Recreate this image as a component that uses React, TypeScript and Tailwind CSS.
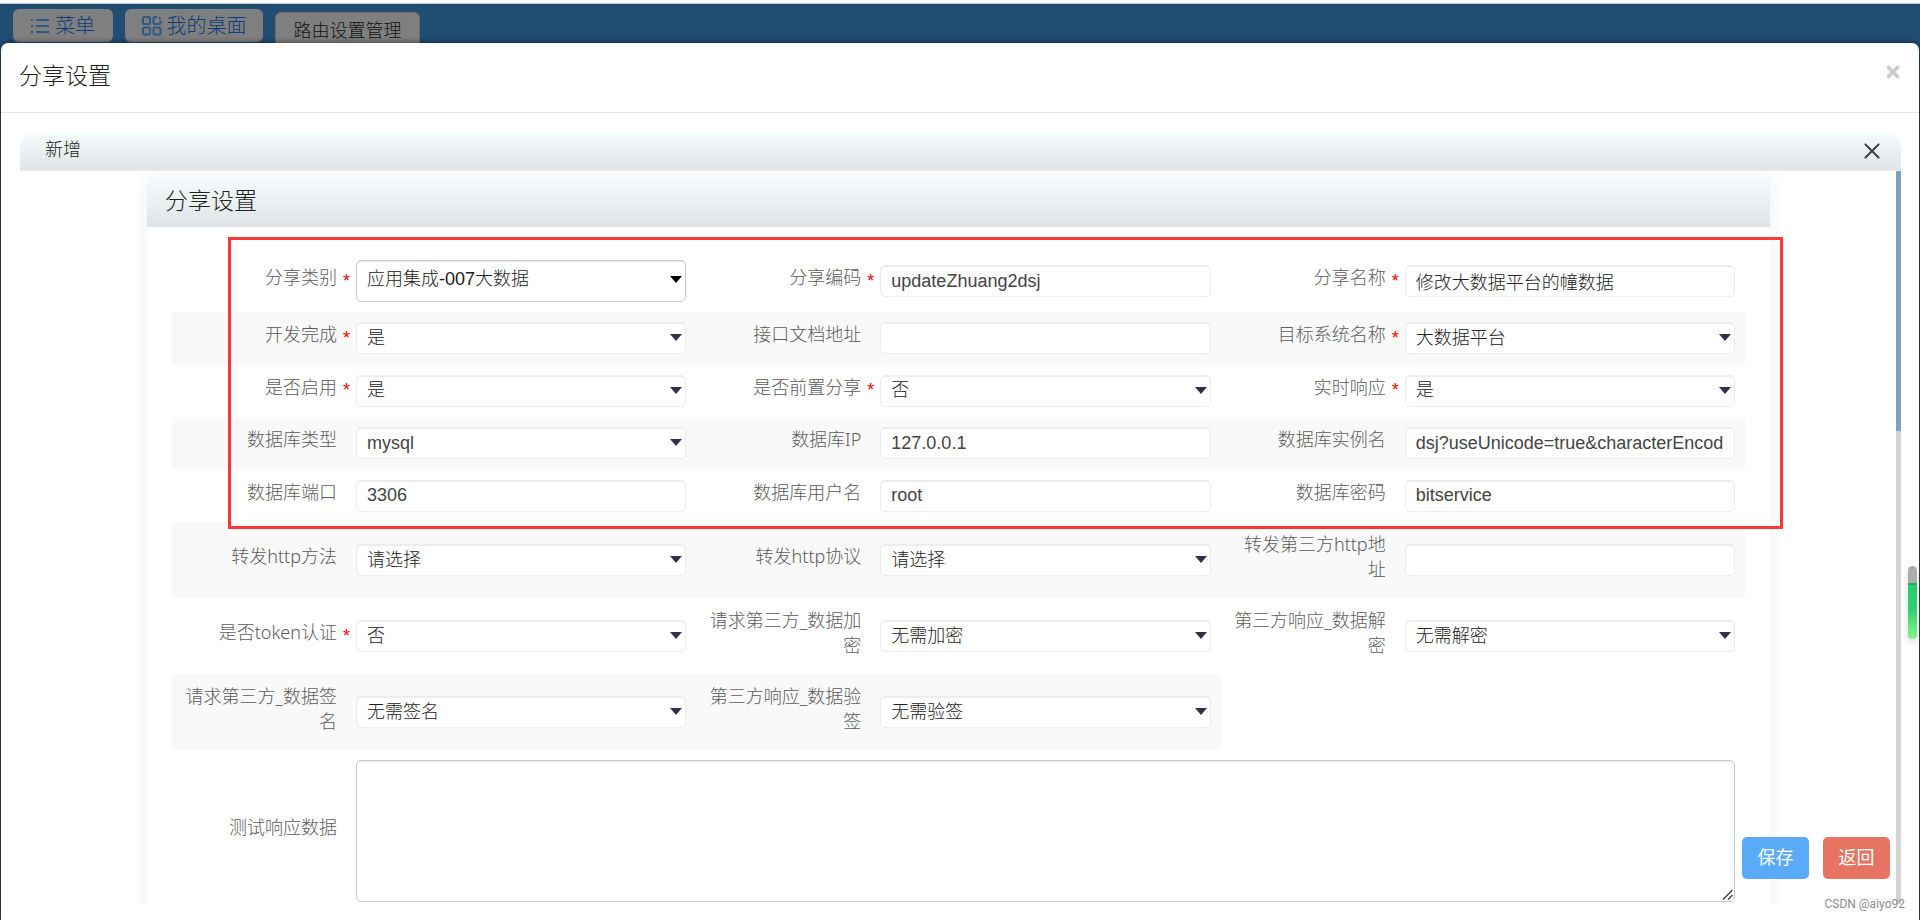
import type { ReactNode } from "react";
import { X } from "lucide-react";

type Field = {
  id: string;
  label: string;
  value?: string;
  select?: boolean;
  required?: boolean;
  prominent?: boolean;
};

const rows: Field[][] = [
  [
    { id: "category", label: "分享类别", value: "应用集成-007大数据", select: true, required: true, prominent: true },
    { id: "code", label: "分享编码", value: "updateZhuang2dsj", required: true },
    { id: "name", label: "分享名称", value: "修改大数据平台的幢数据", required: true },
  ],
  [
    { id: "done", label: "开发完成", value: "是", select: true, required: true },
    { id: "docUrl", label: "接口文档地址" },
    { id: "target", label: "目标系统名称", value: "大数据平台", select: true, required: true },
  ],
  [
    { id: "enabled", label: "是否启用", value: "是", select: true, required: true },
    { id: "preShare", label: "是否前置分享", value: "否", select: true, required: true },
    { id: "realtime", label: "实时响应", value: "是", select: true, required: true },
  ],
  [
    { id: "dbType", label: "数据库类型", value: "mysql", select: true },
    { id: "dbIp", label: "数据库IP", value: "127.0.0.1" },
    { id: "dbInstance", label: "数据库实例名", value: "dsj?useUnicode=true&characterEncoding=utf8" },
  ],
  [
    { id: "dbPort", label: "数据库端口", value: "3306" },
    { id: "dbUser", label: "数据库用户名", value: "root" },
    { id: "dbPassword", label: "数据库密码", value: "bitservice" },
  ],
];

const tallRows: Field[][] = [
  [
    { id: "httpMethod", label: "转发http方法", value: "请选择", select: true },
    { id: "httpProtocol", label: "转发http协议", value: "请选择", select: true },
    { id: "httpUrl", label: "转发第三方http地址" },
  ],
  [
    { id: "token", label: "是否token认证", value: "否", select: true, required: true },
    { id: "encrypt", label: "请求第三方_数据加密", value: "无需加密", select: true },
    { id: "decrypt", label: "第三方响应_数据解密", value: "无需解密", select: true },
  ],
  [
    { id: "sign", label: "请求第三方_数据签名", value: "无需签名", select: true },
    { id: "verify", label: "第三方响应_数据验签", value: "无需验签", select: true },
  ],
];

const controlBase =
  "block w-full min-w-0 appearance-none rounded-[5px] border bg-white px-[10px] font-['Liberation_Sans','Noto_Sans_CJK_SC',sans-serif] text-[18px] font-light outline-none";
const controlPlain = "h-8 border-[#ececec] shadow-[inset_0_1px_1px_#ececec]";
const controlProminent = "h-[42px] border-[#c8c8c8] pb-1 shadow-[inset_0_1px_1px_#ececec]";

function ListIcon() {
  return (
    <svg viewBox="0 0 18 16" className="h-4 w-[18px] text-[#2c5a88]" stroke="currentColor" strokeWidth="2" fill="none">
      <path d="M0 2h2M0 8h2M0 14h2M5 2h13M5 8h13M5 14h13" />
    </svg>
  );
}

function GridIcon() {
  return (
    <svg viewBox="0 0 20 20" className="size-5 text-[#2c5a88]" stroke="currentColor" strokeWidth="2" fill="none">
      <rect x="1" y="1" width="7" height="7" rx="1.5" />
      <rect x="1" y="11.5" width="7" height="7" rx="1.5" />
      <rect x="11.5" y="11.5" width="7" height="7" rx="1.5" />
      <path d="M15 1h-2a1.5 1.5 0 0 0-1.5 1.5v4A1.5 1.5 0 0 0 13 8h4a1.5 1.5 0 0 0 1.5-1.5V4.5M17 1.2l1.5 1.5" />
    </svg>
  );
}

function FieldLabel({ id, required, children }: { id: string; required?: boolean; children: ReactNode }) {
  return (
    <div className="flex w-full items-center pb-[7px] pl-[10px]">
      <label htmlFor={id} className="flex-1 text-right text-[18px] leading-[25px] break-all text-[#5c5c5c]">
        {children}
      </label>
      <span className="w-[19px] shrink-0 pt-[6px] text-center font-['Liberation_Sans',sans-serif] text-[18px] leading-[18px] text-[#f00]">
        {required ? "*" : ""}
      </span>
    </div>
  );
}

function FieldCell({ field, striped }: { field: Field; striped: boolean }) {
  const look = field.prominent ? controlProminent : controlPlain;
  const isLatin = /^[\x20-\x7e]*$/.test(field.value ?? "");
  const tone = isLatin ? "text-[#444]" : "text-[#222]";
  return (
    <div className={`flex w-1/3 items-center pr-[10px] ${striped ? "bg-[#f9f9f9]" : ""}`}>
      <div className="w-[184px] shrink-0">
        <FieldLabel id={field.id} required={field.required}>
          {field.label}
        </FieldLabel>
      </div>
      <div className="relative min-w-0 flex-1">
        {field.select ? (
          <>
            <select id={field.id} defaultValue={field.value} className={`${controlBase} ${look} ${tone}`}>
              <option>{field.value}</option>
            </select>
            <svg
              viewBox="0 0 12 7"
              className={`pointer-events-none absolute right-1 h-[7px] w-3 ${
                field.prominent ? "top-4 text-black" : "top-3 text-[#30304a]"
              }`}
            >
              <path d="M0 0h12L6 7z" fill="currentColor" />
            </svg>
          </>
        ) : (
          <input id={field.id} type="text" defaultValue={field.value} className={`${controlBase} ${look} ${tone}`} />
        )}
      </div>
    </div>
  );
}

export default function App() {
  return (
    <div className="flex h-screen flex-col overflow-hidden bg-[#444] font-['Noto_Sans','Noto_Sans_CJK_SC',sans-serif] font-light">
      <div className="h-1 shrink-0 border-b border-[#c9ccd0] bg-white" />
      <nav className="flex h-[39px] shrink-0 items-end bg-[#224d73] pl-[13px]">
        <button className="mb-px flex h-[33px] w-[100px] items-center justify-center gap-[6px] rounded-md bg-[#7f7f7f] text-[20px] text-[#0a3d7a]">
          <ListIcon />
          菜单
        </button>
        <button className="mb-px ml-3 flex h-[33px] w-[138px] items-center justify-center gap-[5px] rounded-md bg-[#7f7f7f] text-[20px] text-[#0a3d7a]">
          <GridIcon />
          我的桌面
        </button>
        <button className="ml-3 h-[31px] w-[145px] rounded-t-md border border-b-0 border-[#6d6d6d] bg-[#7f7f7f] pt-1 text-[18px] leading-6 text-[#111]">
          路由设置管理
        </button>
      </nav>

      <div className="flex min-h-0 flex-1 bg-linear-to-b from-[#224d73] from-[44px] to-[#444] to-[44px]">
        <section className="relative mx-px flex min-h-0 flex-1 flex-col rounded-t-[7px] bg-white shadow-[0_0_6px_rgba(0,0,0,0.6)]">
          <header className="flex h-[70px] shrink-0 items-start justify-between border-b border-[#e5e5e5] pt-4 pr-[17px] pl-[18px]">
            <h1 className="text-[23px] leading-8 text-[#222]">分享设置</h1>
            <button aria-label="关闭窗口" className="mt-1 text-[#ccc]">
              <X className="size-[18px]" strokeWidth={5} />
            </button>
          </header>

          <div className="mt-[19px] mr-[18px] mb-4 ml-[19px] flex min-h-0 flex-1 flex-col">
            <div className="flex h-[39px] shrink-0 items-center justify-between rounded-t-[15px] border-b border-[#eceeef] bg-linear-to-b from-[#f7fdff] to-[#dfe4e6] pr-4 pl-[25px]">
              <h2 className="pb-1 text-[18px] leading-6 text-[#222]">新增</h2>
              <button aria-label="关闭" className="text-[#44444f]">
                <X className="size-[26px]" strokeWidth={2} />
              </button>
            </div>

            <div className="flex min-h-0 flex-1">
              <div className="min-h-0 flex-1 overflow-hidden pt-1 pr-[126px] pl-[127px]">
                <div className="relative bg-white shadow-[0_0_18px_rgba(0,0,0,0.06)]">
                  <h3 className="h-[52px] bg-linear-to-b from-[#f7fdff] to-[#dfe4e6] pl-[18px] text-[23px] leading-[50px] text-[#222]">
                    分享设置
                  </h3>
                  <form className="px-[25px] pt-[23px] pb-10">
                    {rows.map((fields, i) => (
                      <div key={i} className={`flex ${i === 0 ? "h-[62px]" : i % 2 ? "h-[52px]" : "h-[53px]"}`}>
                        {fields.map((f) => (
                          <FieldCell key={f.id} field={f} striped={i % 2 === 1} />
                        ))}
                      </div>
                    ))}
                    {tallRows.map((fields, i) => (
                      <div key={i} className="flex h-[76px]">
                        {fields.map((f) => (
                          <FieldCell key={f.id} field={f} striped={i % 2 === 0} />
                        ))}
                      </div>
                    ))}
                    <div className="flex items-center pt-[10px] pr-[10px]">
                      <div className="w-[184px] shrink-0">
                        <FieldLabel id="testResponse">测试响应数据</FieldLabel>
                      </div>
                      <div className="relative min-w-0 flex-1">
                        <textarea
                          id="testResponse"
                          className="block h-[142px] w-full resize-none rounded-[5px] border border-[#c8c8c8] bg-white px-[10px] text-[18px] shadow-[inset_0_1px_1px_#ececec] outline-none"
                        />
                        <svg
                          viewBox="0 0 11 11"
                          className="pointer-events-none absolute right-[2px] bottom-[2px] size-[11px] text-[#444]"
                          stroke="currentColor"
                          strokeWidth="1.5"
                        >
                          <path d="M1 10.5 10.5 1M6 10.5 10.5 6" />
                        </svg>
                      </div>
                    </div>
                  </form>
                  <div className="pointer-events-none absolute top-[62px] -right-[13px] left-[81px] h-[292px] border-[3px] border-[#fb3838]" />
                </div>
              </div>
              <div className="w-[5px] shrink-0 bg-[#d3d3d3]">
                <div className="h-[260px] bg-[#82a1bb]" />
              </div>
            </div>
          </div>

          <div className="absolute right-[29px] bottom-[41px] flex gap-[14px] text-[18px] font-normal text-white">
            <button className="h-[42px] w-[67px] rounded-[5px] bg-[#5aabf7] pb-[2px]">保存</button>
            <button className="h-[42px] w-[67px] rounded-[5px] bg-[#e77462] pb-[2px]">返回</button>
          </div>

          <div className="absolute top-[523px] right-[2px] h-[73px] w-[9px] overflow-hidden rounded-full bg-[#adadad] shadow-[0_4px_8px_rgba(0,0,0,0.15)]">
            <div className="mt-[17px] h-14 border-t-2 border-[#1fae60] bg-linear-to-b from-[#2acb6c] via-[#2fd374] to-[#86f58a]" />
          </div>

          <p className="absolute right-[14px] bottom-2 font-['Roboto',sans-serif] text-[12px] leading-4 font-normal text-[#8c8c8c]">
            CSDN @aiyo92
          </p>
        </section>
      </div>
    </div>
  );
}
